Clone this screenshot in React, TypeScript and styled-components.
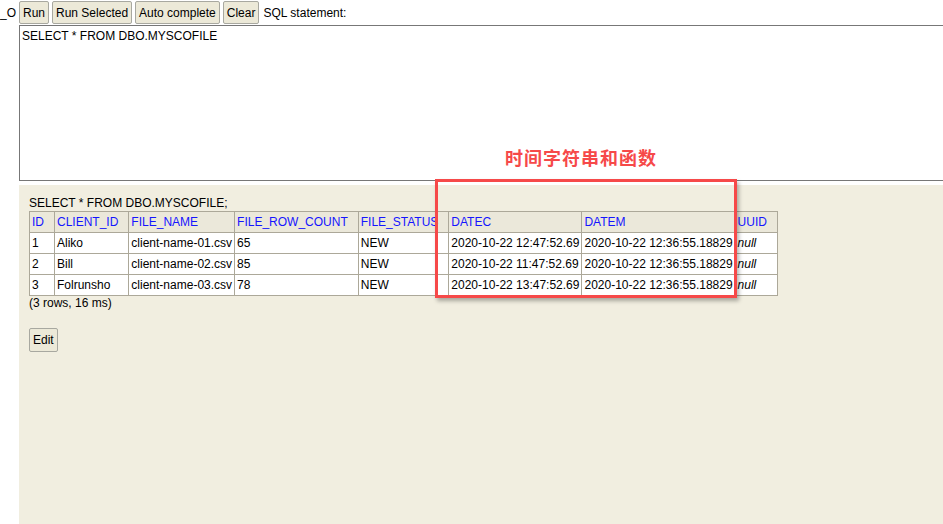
import React from "react";
import styled, { createGlobalStyle } from "styled-components";

const Global = createGlobalStyle`
  html, body { margin: 0; padding: 0; background: #fff; }
  body {
    font-family: "Liberation Sans", Arial, sans-serif;
    font-size: 12px;
    color: #000;
    overflow: hidden;
  }
`;

const Page = styled.div`
  position: relative;
  display: flex;
  width: 943px;
  height: 524px;
  overflow: hidden;
`;

const Gutter = styled.div`
  width: 19px;
  flex: none;
  padding-top: 6px;
  font-size: 12px;
  line-height: 14px;
  white-space: nowrap;
  overflow: hidden;
`;

const Main = styled.div`
  flex: 1;
  min-width: 0;
  display: flex;
  flex-direction: column;
`;

const Toolbar = styled.div`
  display: flex;
  align-items: center;
  gap: 3px;
  height: 25px;
`;

const Button = styled.button`
  font-family: "Liberation Sans", Arial, sans-serif;
  font-size: 12px;
  height: 23px;
  padding: 0 3px;
  margin: 0;
  background: #ece9d8;
  border: 1px solid #a8a8a0;
  border-radius: 2px;
  color: #000;
  line-height: 14px;
`;

const Label = styled.span`
  margin-left: 1px;
  line-height: 14px;
`;

const Editor = styled.textarea`
  display: block;
  box-sizing: border-box;
  width: calc(100% + 20px);
  height: 156px;
  margin: 0;
  padding: 3px 2px;
  border: 1px solid #777;
  font-family: "Liberation Sans", Arial, sans-serif;
  font-size: 12px;
  line-height: 14px;
  resize: none;
  background: #fff;
  color: #000;
  outline: none;
`;

const Result = styled.div`
  flex: 1;
  margin-top: 4px;
  background: #f1eee0;
  padding: 11px 10px 0;
  line-height: 14px;
`;

const Sql = styled.div`
  height: 15px;
`;

const Table = styled.table`
  border-collapse: collapse;
  font-size: 12px;
`;

const Th = styled.th`
  background: #ebe8da;
  color: #1515ff;
  font-weight: normal;
  text-align: left;
  padding: 3px 10px 3px 2px;
  border: 1px solid #aca899;
  line-height: 14px;
  white-space: nowrap;
`;

const Td = styled.td<{ $null?: boolean }>`
  background: #fff;
  padding: 3px 2px;
  border: 1px solid #aca899;
  line-height: 14px;
  white-space: nowrap;
  font-style: ${(p) => (p.$null ? "italic" : "normal")};
`;

const Info = styled.div`
  height: 16px;
`;

const EditButton = styled(Button)`
  margin-top: 16px;
  height: 24px;
  padding: 0 3px;
`;

const Highlight = styled.div`
  position: absolute;
  left: 435px;
  top: 179px;
  width: 296px;
  height: 113px;
  border: 3px solid #f64949;
  box-shadow: 2px 3px 4px rgba(0, 0, 0, 0.3);
  pointer-events: none;
`;

const Note = styled.div`
  position: absolute;
  left: 505px;
  top: 145px;
  color: #f64949;
  font-family: "Noto Sans CJK SC", "Noto Sans", sans-serif;
  font-weight: bold;
  font-size: 18px;
  line-height: 24px;
  letter-spacing: 1px;
`;

const columns = [
  "ID",
  "CLIENT_ID",
  "FILE_NAME",
  "FILE_ROW_COUNT",
  "FILE_STATUS",
  "DATEC",
  "DATEM",
  "UUID",
];

const rows = [
  ["1", "Aliko", "client-name-01.csv", "65", "NEW", "2020-10-22 12:47:52.69", "2020-10-22 12:36:55.18829"],
  ["2", "Bill", "client-name-02.csv", "85", "NEW", "2020-10-22 11:47:52.69", "2020-10-22 12:36:55.18829"],
  ["3", "Folrunsho", "client-name-03.csv", "78", "NEW", "2020-10-22 13:47:52.69", "2020-10-22 12:36:55.18829"],
];

export default function App() {
  return (
    <>
      <Global />
      <Page>
        <Gutter>_O</Gutter>
        <Main>
          <Toolbar>
            <Button>Run</Button>
            <Button>Run Selected</Button>
            <Button>Auto complete</Button>
            <Button>Clear</Button>
            <Label>SQL statement:</Label>
          </Toolbar>
          <Editor readOnly value="SELECT * FROM DBO.MYSCOFILE" />
          <Result>
            <Sql>SELECT * FROM DBO.MYSCOFILE;</Sql>
            <Table>
              <thead>
                <tr>
                  {columns.map((c) => (
                    <Th key={c}>{c}</Th>
                  ))}
                </tr>
              </thead>
              <tbody>
                {rows.map((r) => (
                  <tr key={r[0]}>
                    {r.map((v, i) => (
                      <Td key={i}>{v}</Td>
                    ))}
                    <Td $null>null</Td>
                  </tr>
                ))}
              </tbody>
            </Table>
            <Info>(3 rows, 16 ms)</Info>
            <EditButton>Edit</EditButton>
          </Result>
        </Main>
        <Note>时间字符串和函数</Note>
        <Highlight />
      </Page>
    </>
  );
}
